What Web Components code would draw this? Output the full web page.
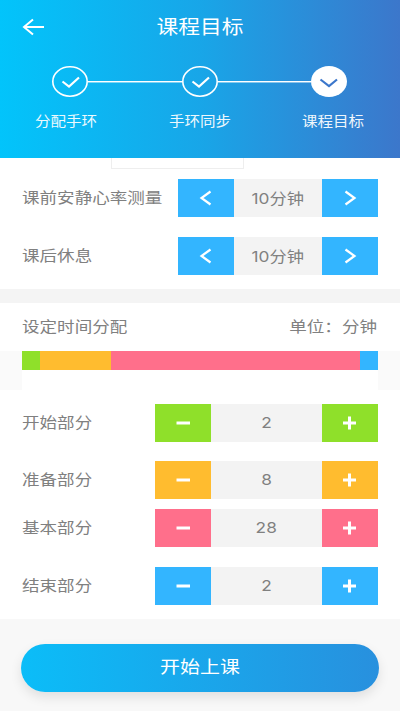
<!DOCTYPE html>
<html lang="zh">
<head>
<meta charset="utf-8">
<title>课程目标</title>
<style>
  html, body { margin: 0; padding: 0; background: #fff; }
  body {
    width: 400px;
    height: 711px;
    overflow: hidden;
    font-family: "Noto Sans CJK SC", "Liberation Sans", sans-serif;
    color: #808080;
  }
</style>
</head>
<body>
<course-header>
  <course-step state="done" shift="-8">分配手环</course-step>
  <course-step state="done">手环同步</course-step>
  <course-step state="current" shift="8">课程目标</course-step>
</course-header>
<top-strip></top-strip>
<time-stepper label="课前安静心率测量" value="10分钟" kind="arrow" gap="20"></time-stepper>
<time-stepper label="课后休息" value="10分钟" kind="arrow"></time-stepper>
<time-share></time-share>
<part-list>
  <time-stepper label="开始部分" value="2" kind="count" color="#8fe02a" gap="19"></time-stepper>
  <time-stepper label="准备部分" value="8" kind="count" color="#ffbc2f" gap="10"></time-stepper>
  <time-stepper label="基本部分" value="28" kind="count" color="#ff6f8b" gap="20"></time-stepper>
  <time-stepper label="结束部分" value="2" kind="count" color="#33b5ff"></time-stepper>
</part-list>
<start-bar>开始上课</start-bar>

<script>
// the screenshot is stretched sideways, so the text gets a scaleX to follow it
class CourseHeader extends HTMLElement {
  constructor() {
    super();
    this.attachShadow({ mode: 'open' });
    this.shadowRoot.innerHTML = `
      <style>
        :host {
          display: block;
          height: 158px;
          box-sizing: border-box;
          padding-top: 15px;
          background: linear-gradient(90deg, #02c4fb 0%, #18a6e8 50%, #3c77cb 100%);
          color: #fff;
        }
        .top { display: grid; grid-template-columns: 1fr auto 1fr; align-items: center; height: 24px; }
        .back { margin: 0 0 0 22px; display: block; }
        h1 { margin: -3px 0 0; font-size: 19px; font-weight: 400; line-height: 24px; transform: scaleX(1.145); }
        .steps { display: flex; padding: 27px 0 0 5.5px; }
      </style>
      <div class="top">
        <svg class="back" width="24" height="20" viewBox="0 0 24 20" fill="none" stroke="#fff" stroke-width="2">
          <path d="M22 10H2M11 2.500 2 10l9 7.500"/>
        </svg>
        <h1>课程目标</h1>
        <span></span>
      </div>
      <div class="steps"><slot></slot></div>
    `;
  }
}

class CourseStep extends HTMLElement {
  constructor() {
    super();
    this.attachShadow({ mode: 'open' });
    const current = this.getAttribute('state') === 'current';
    const shift = this.getAttribute('shift') || 0;
    this.shadowRoot.innerHTML = `
      <style>
        :host { display: flex; flex-direction: column; align-items: center; width: 129.5px; position: relative; }
        svg { display: block; }
        .line { position: absolute; left: calc(50% + 18px); width: 93.5px; top: 15px; height: 1px; background: #fff; box-shadow: 0 1px rgba(255, 255, 255, .45); }
        :host([state="current"]) .line { display: none; }
        .name { margin: 13px 0 0 ${shift}px; font-size: 13.500px; line-height: 20px; white-space: nowrap; opacity: .92; transform: scaleX(1.15); }
      </style>
      <span class="line"></span>
      ${current ? `
      <svg width="36" height="31" viewBox="0 0 36 31">
        <ellipse cx="18" cy="15.500" rx="18" ry="15.500" fill="#fff"/>
        <path d="M9.500 13.500 18 20l8-6.500" fill="none" stroke="#3c77cb" stroke-width="2.200"/>
      </svg>` : `
      <svg width="36" height="31" viewBox="0 0 36 31">
        <ellipse cx="18" cy="15.500" rx="17.200" ry="14.700" fill="none" stroke="#fff" stroke-width="1.600"/>
        <path d="M10.500 15.500 17 20.500l10-9" fill="none" stroke="#fff" stroke-width="2.200"/>
      </svg>`}
      <span class="name"><slot></slot></span>
    `;
  }
}

class TopStrip extends HTMLElement {
  constructor() {
    super();
    this.attachShadow({ mode: 'open' });
    this.shadowRoot.innerHTML = `
      <style>
        :host { display: block; height: 21px; padding-left: 111px; }
        div { width: 133px; height: 11px; box-sizing: border-box; border: 1px solid #eee; border-top: 0; }
      </style>
      <div></div>
    `;
  }
}

class TimeStepper extends HTMLElement {
  constructor() {
    super();
    this.attachShadow({ mode: 'open' });
    const arrow = this.getAttribute('kind') === 'arrow';
    const color = this.getAttribute('color') || '#33b5ff';
    const gap = this.getAttribute('gap') || 0;
    const left = arrow
      ? '<path d="M32.500 12.500 23.500 19l9 6.500" fill="none" stroke="#fff" stroke-width="2.200"/>'
      : '<path d="M21.500 19H35" stroke="#fff" stroke-width="3"/>';
    const right = arrow
      ? '<path d="M23.500 12.500 32.500 19l-9 6.500" fill="none" stroke="#fff" stroke-width="2.200"/>'
      : '<path d="M21 19H34M27.500 12.500V25.500" stroke="#fff" stroke-width="3"/>';
    this.shadowRoot.innerHTML = `
      <style>
        :host { display: flex; align-items: center; height: 38px; padding: 0 22px; margin-bottom: ${gap}px; }
        .label { flex: 1; font-size: 15px; line-height: 20px; margin-top: -2px; white-space: nowrap; transform: scaleX(1.17); transform-origin: left; }
        .ctrl { display: grid; grid-template-columns: 56px 1fr 56px; height: 38px; width: ${arrow ? 200 : 223}px; }
        .btn { background: ${color}; display: block; }
        .btn svg { display: block; }
        .val { background: #f3f3f3; display: flex; align-items: center; justify-content: center; }
        .val span { margin-top: -2px; font-family: Inter, "Noto Sans CJK SC", sans-serif; font-size: 15px; transform: scaleX(1.15); color: #808080; }
      </style>
      <span class="label">${this.getAttribute('label')}</span>
      <div class="ctrl">
        <span class="btn"><svg width="56" height="38" viewBox="0 0 56 38">${left}</svg></span>
        <span class="val"><span>${this.getAttribute('value')}</span></span>
        <span class="btn"><svg width="56" height="38" viewBox="0 0 56 38">${right}</svg></span>
      </div>
    `;
  }
}

class TimeShare extends HTMLElement {
  constructor() {
    super();
    this.attachShadow({ mode: 'open' });
    this.shadowRoot.innerHTML = `
      <style>
        :host { display: block; border-top: 14px solid #f4f4f4; margin-top: 14px; }
        .head { display: flex; justify-content: space-between; align-items: center; height: 48px; padding: 0 23px 0 22px; font-size: 15px; }
        .head span { line-height: 20px; margin-top: -2px; transform: scaleX(1.17); transform-origin: left; }
        .head span + span { transform-origin: right; }
        .track { background: #fafafa; padding: 0 22px; height: 39px; }
        .inner { background: #fff; height: 39px; }
        .bar { display: flex; height: 19px; }
        .bar i { display: block; }
      </style>
      <div class="head"><span>设定时间分配</span><span>单位：分钟</span></div>
      <div class="track"><div class="inner"><div class="bar">
        <i style="width:18px;background:#8fe02a"></i>
        <i style="width:71px;background:#ffbc2f"></i>
        <i style="width:249px;background:#ff6f8b"></i>
        <i style="width:18px;background:#33b5ff"></i>
      </div></div></div>
    `;
  }
}

class PartList extends HTMLElement {
  constructor() {
    super();
    this.attachShadow({ mode: 'open' });
    this.shadowRoot.innerHTML = `
      <style>:host { display: block; padding: 14px 0; }</style>
      <slot></slot>
    `;
  }
}

class StartBar extends HTMLElement {
  constructor() {
    super();
    this.attachShadow({ mode: 'open' });
    this.shadowRoot.innerHTML = `
      <style>
        :host { display: block; background: #f8f8f8; height: 92px; padding: 25px 21px 0; box-sizing: border-box; }
        button {
          display: flex; align-items: center; justify-content: center;
          width: 358px; height: 48px; border: 0; border-radius: 24px; padding: 0 0 6px;
          box-sizing: border-box;
          background: linear-gradient(90deg, #0bbdf8, #2890de);
          box-shadow: 0 5px 12px rgba(0, 0, 0, .1);
          color: #fff; font: 400 17.500px "Noto Sans CJK SC", "Liberation Sans", sans-serif;
        }
        span { display: block; transform: scaleX(1.14); }
      </style>
      <button><span><slot></slot></span></button>
    `;
  }
}

customElements.define('course-header', CourseHeader);
customElements.define('course-step', CourseStep);
customElements.define('top-strip', TopStrip);
customElements.define('time-stepper', TimeStepper);
customElements.define('time-share', TimeShare);
customElements.define('part-list', PartList);
customElements.define('start-bar', StartBar);
</script>
</body>
</html>
